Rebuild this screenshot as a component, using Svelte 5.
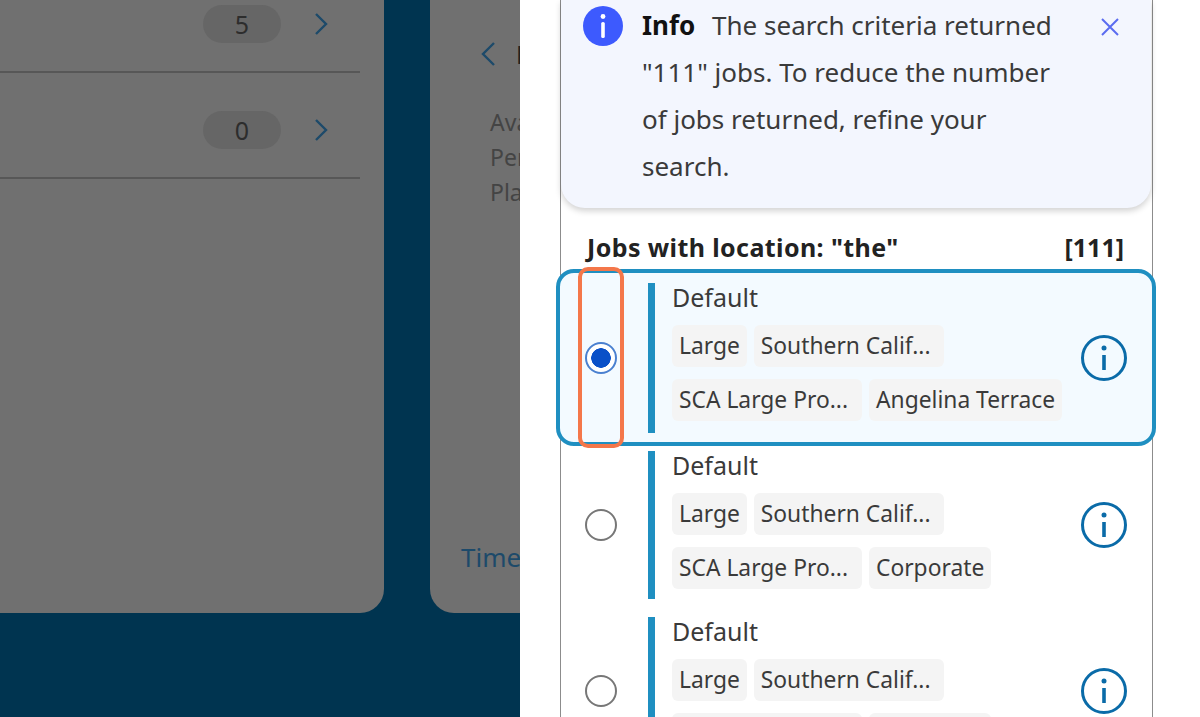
<script lang="ts">
  const jobs = [
    { selected: true, last: "Angelina Terrace" },
    { selected: false, last: "Corporate" },
    { selected: false, last: "Corporate" },
  ];
  const counts = [5, 0];
</script>

<div class="page">
  <div class="backdrop">
    <section class="card list">
      {#each counts as n}
        <div class="row">
          <span class="pill">{n}</span>
          <svg class="chev" width="14" height="24" viewBox="0 0 14 24"><path d="M2 2l10 10L2 22" /></svg>
        </div>
      {/each}
    </section>
    <section class="card detail">
      <div class="detail-head">
        <svg class="chev" width="16" height="26" viewBox="0 0 16 26"><path d="M14 2L3 13l11 11" /></svg>
        <b>Details</b>
      </div>
      <div class="detail-lines">
        <span>Available</span>
        <span>Period</span>
        <span>Place</span>
      </div>
      <div class="time">Time</div>
    </section>
  </div>

  <aside class="drawer">
    <div class="panel">
      <div class="alert">
        <svg class="alert-icon" width="40" height="40" viewBox="0 0 40 40">
          <circle cx="20" cy="20" r="20" fill="#3d5afe" />
          <circle cx="20" cy="10.5" r="2.4" fill="#fff" />
          <rect x="18.2" y="16" width="3.6" height="16" rx="1.6" fill="#fff" />
        </svg>
        <p><b>Info</b> The search criteria returned "111" jobs. To reduce the number of jobs returned, refine your search.</p>
        <svg class="close" width="20" height="20" viewBox="0 0 20 20"><path d="M2 2l16 16M18 2L2 18" /></svg>
      </div>

      <div class="heading">
        <span class="title">Jobs with location: "the"</span>
        <span>[111]</span>
      </div>

      <div class="jobs">
        {#each jobs as job}
          <div class="job" class:selected={job.selected}>
            <span class="radio"></span>
            <div class="body">
              <div class="name">Default</div>
              <div class="tags">
                <span class="tag">Large</span>
                <span class="tag long">Southern Calif...</span>
                <span class="tag long">SCA Large Pro...</span>
                <span class="tag">{job.last}</span>
              </div>
            </div>
            <svg class="info" width="48" height="48" viewBox="0 0 48 48">
              <circle cx="24" cy="24" r="21.5" />
              <circle class="dot" cx="24" cy="14" r="2.5" />
              <path d="M24 21v15" />
            </svg>
          </div>
        {/each}
      </div>
    </div>
    <div class="callout"></div>
  </aside>
</div>

<style>
  :global(body) {
    margin: 0;
  }
  .page {
    display: flex;
    width: 1200px;
    height: 717px;
    overflow: hidden;
    font-family: "Noto Sans", sans-serif;
    color: #333;
  }
  .backdrop {
    display: flex;
    gap: 46px;
    width: 520px;
    flex: none;
    overflow: hidden;
    background: #003450;
    align-items: flex-start;
  }
  .card {
    height: 613px;
    flex: none;
    background: #707070;
    box-sizing: border-box;
  }
  .list {
    width: 384px;
    padding: 5px 24px 0 0;
    border-radius: 0 0 24px 0;
  }
  .row {
    display: flex;
    align-items: center;
    justify-content: flex-end;
    gap: 33px;
    height: 38px;
    padding: 0 32px 28px 0;
    border-bottom: 2px solid #575757;
  }
  .row + .row {
    margin-top: 38px;
  }
  .pill {
    width: 78px;
    height: 38px;
    border-radius: 19px;
    background: #666;
    color: #2d2d2d;
    font-size: 25px;
    line-height: 38px;
    text-align: center;
  }
  .chev path {
    fill: none;
    stroke: #1d4a6a;
    stroke-width: 2.4;
  }
  .detail {
    width: 500px;
    padding: 40px 0 0 50px;
    border-radius: 0 0 0 24px;
  }
  .detail-head {
    display: flex;
    align-items: center;
    gap: 20px;
    height: 28px;
    color: #222;
    font-size: 25px;
  }
  .detail-head b {
    font-weight: 500;
  }
  .detail-lines {
    display: flex;
    flex-direction: column;
    margin: 37px 0 0 10px;
    font-size: 23px;
    line-height: 35px;
    color: #444;
  }
  .time {
    margin: 329px 0 0 -19px;
    font-size: 26px;
    color: #1d4a6a;
  }
  .drawer {
    flex: 1;
    position: relative;
    background: #fff;
    padding-left: 40px;
  }
  .panel {
    width: 593px;
    height: 900px;
    box-sizing: border-box;
    border: solid #8c8c8c;
    border-width: 0 1px;
  }
  .alert {
    display: flex;
    align-items: flex-start;
    height: 208px;
    box-sizing: border-box;
    margin-right: 1px;
    padding: 6px 31px 0 22px;
    background: #f3f6fe;
    border-radius: 0 0 24px 24px;
    box-shadow: 0 3px 6px rgba(0, 0, 0, 0.18);
  }
  .alert-icon {
    flex: none;
  }
  .alert p {
    width: 412px;
    margin: -4px 0 0 19px;
    font-size: 26px;
    line-height: 47px;
    color: #3a3a3a;
  }
  .alert b {
    margin-right: 10px;
    color: #111;
    font-weight: 700;
  }
  .close {
    flex: none;
    margin: 11px 0 0 auto;
  }
  .close path {
    fill: none;
    stroke: #5a6cf0;
    stroke-width: 2;
  }
  .heading {
    display: flex;
    justify-content: space-between;
    padding: 23px 28px 0 26px;
    height: 61px;
    box-sizing: border-box;
    font-size: 25px;
    line-height: 32px;
    font-weight: 700;
    color: #222;
  }
  .title {
    letter-spacing: 0.4px;
  }
  .jobs {
    display: flex;
    flex-direction: column;
    gap: 18px;
  }
  .job {
    display: flex;
    align-items: center;
    height: 148px;
    padding: 0 24px;
  }
  .job.selected {
    height: 177px;
    box-sizing: border-box;
    margin: 0 -4px -13px -5px;
    padding: 0 24px 0 25px;
    border: 4px solid #1f8fc1;
    border-radius: 18px;
    background: #f3faff;
  }
  .radio {
    width: 32px;
    height: 32px;
    flex: none;
    box-sizing: border-box;
    border: 2px solid #777;
    border-radius: 50%;
    background: #fff;
  }
  .selected .radio {
    border-color: #4a80d0;
    background: radial-gradient(circle, #0a50c8 0 9.5px, #fff 10px);
  }
  .body {
    flex: 1;
    margin-left: 31px;
    padding-left: 17px;
    border-left: 7px solid #1f8fc1;
    height: 148px;
    box-sizing: border-box;
  }
  .selected .body {
    height: 150px;
  }
  .name {
    height: 42px;
    font-size: 25px;
    line-height: 28px;
    color: #3a3a3a;
  }
  .tags {
    display: flex;
    flex-wrap: wrap;
    gap: 12px 7px;
    width: 400px;
  }
  .tag {
    height: 42px;
    padding: 0 7px;
    border-radius: 6px;
    background: #f4f4f4;
    font-size: 22.8px;
    line-height: 42px;
    color: #3a3a3a;
    white-space: nowrap;
  }
  .tag.long {
    width: 190px;
    box-sizing: border-box;
  }
  .info {
    flex: none;
    margin-left: 8px;
  }
  .info circle {
    fill: none;
    stroke: #0a6ba8;
    stroke-width: 3;
  }
  .info .dot {
    fill: #0a6ba8;
    stroke: none;
  }
  .info path {
    fill: none;
    stroke: #0a6ba8;
    stroke-width: 3.6;
  }
  .callout {
    position: absolute;
    left: 58px;
    top: 267px;
    width: 46px;
    height: 181px;
    box-sizing: border-box;
    border: 4px solid #f4774a;
    border-radius: 10px;
  }
</style>
